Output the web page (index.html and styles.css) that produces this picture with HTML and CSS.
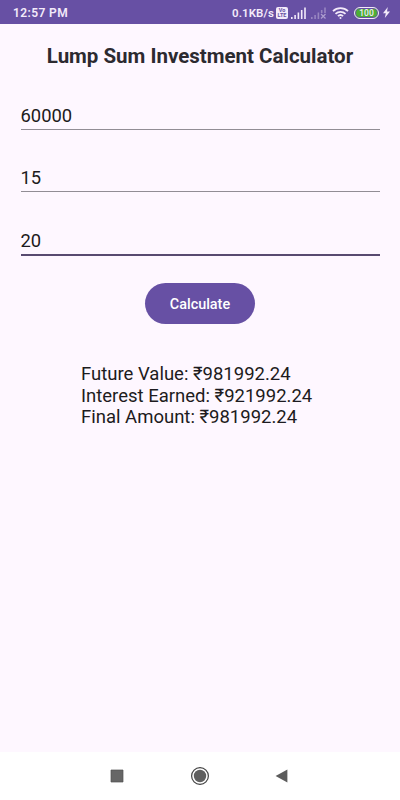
FILE: index.html
```html
<!doctype html>
<html lang="en">
  <head>
    <meta charset="UTF-8" />
    <meta name="viewport" content="width=device-width, initial-scale=1" />
    <title>Lump Sum Investment Calculator</title>
    <link rel="stylesheet" href="styles.css">
  </head>
  <body>
    <header class="status-bar">
      <span class="clock">12:57 PM</span>
      <div class="status-icons">
        <span class="net-speed">0.1KB/s</span>
        <span class="volte"><span>Vo</span><span>LTE</span></span>
        <svg class="signal" width="16" height="12" viewBox="0 0 16 12" fill="currentColor">
          <path d="M0 10h1.6v2H0zM3.3 8h1.6v4H3.3zM6.6 5.5h1.6V12H6.6zM9.9 3h1.6v9H9.9zM13.2 .5h1.6V12h-1.6z" />
        </svg>
        <svg class="signal-off" width="16" height="12" viewBox="0 0 16 12" fill="currentColor">
          <path opacity=".35" d="M0 10h1.6v2H0zM3.3 8h1.6v4H3.3zM6.6 5.5h1.6V12H6.6zM9.9 3h1.6v3H9.9zM13.2 .5h1.6V6h-1.6z" />
          <path opacity=".5" d="M10 7l4.5 4.5M14.5 7L10 11.5" stroke="currentColor" stroke-width="1.2" />
        </svg>
        <svg class="wifi" width="17" height="12" viewBox="0 0 17 12" fill="none" stroke="currentColor" stroke-width="1.8">
          <path d="M1 4.2a10.8 10.8 0 0 1 15 0M3.5 6.8a7.2 7.2 0 0 1 10 0M5.9 9.2a3.8 3.8 0 0 1 5.2 0" />
          <circle cx="8.5" cy="10.9" r="1" fill="currentColor" stroke="none" />
        </svg>
        <span class="battery">100</span>
        <svg class="bolt" width="7" height="11" viewBox="0 0 7 11" fill="currentColor">
          <path d="M4.8 0L0 6.2h2.8L1.8 11 7 4.5H4z" />
        </svg>
      </div>
    </header>

    <main class="calculator">
      <h1>Lump Sum Investment Calculator</h1>
      <input class="field" type="text" inputmode="decimal" value="60000" aria-label="Investment amount" />
      <input class="field" type="text" inputmode="decimal" value="15" aria-label="Interest rate" />
      <input class="field active" type="text" inputmode="decimal" value="20" aria-label="Years" />
      <button class="calculate-button" type="button">Calculate</button>
      <div class="result">
        <p>Future Value: ₹981992.24</p>
        <p>Interest Earned: ₹921992.24</p>
        <p>Final Amount: ₹981992.24</p>
      </div>
    </main>

    <nav class="nav-bar">
      <svg width="20" height="20" viewBox="0 0 20 20">
        <path d="M4 4h12v12H4z" fill="#666" stroke="#505050" stroke-width=".7" />
      </svg>
      <svg width="20" height="20" viewBox="0 0 20 20">
        <circle cx="10" cy="10" r="8.4" fill="none" stroke="#444" stroke-width="1.2" />
        <circle cx="10" cy="10" r="6.2" fill="#606060" />
      </svg>
      <svg width="20" height="20" viewBox="0 0 20 20">
        <path d="M2.6 10L14.4 3.4v13.2z" fill="#5c5c5c" />
      </svg>
    </nav>
  </body>
</html>
```

FILE: styles.css
```css
:root {
  --primary-color: #6750a4;
  --surface: #fef7ff;
  --text: #1d1b20;
}

* {
  box-sizing: border-box;
  margin: 0;
  padding: 0;
}

body {
  display: flex;
  flex-direction: column;
  height: 100vh;
  font-family: Roboto, "Noto Sans", sans-serif;
  background-color: var(--surface);
  color: var(--text);
}

.status-bar {
  display: flex;
  justify-content: space-between;
  align-items: center;
  height: 24px;
  padding: 1px 10px 0 13px;
  background-color: var(--primary-color);
  color: #f3eafa;
}

.clock {
  font-size: 12px;
  font-weight: 600;
  letter-spacing: 0.4px;
}

.status-icons {
  display: flex;
  align-items: center;
}

.net-speed {
  font-size: 11.5px;
  font-weight: 600;
  letter-spacing: 0.1px;
}

.volte {
  display: flex;
  flex-direction: column;
  align-items: center;
  justify-content: center;
  width: 12px;
  height: 12px;
  margin-left: 2px;
  border-radius: 2px;
  background-color: #f3eafa;
  color: var(--primary-color);
  font-size: 5.5px;
  font-weight: 700;
  line-height: 5px;
}

.signal {
  margin-left: 3px;
}

.signal-off {
  margin-left: 4px;
}

.wifi {
  margin-left: 5px;
}

.battery {
  width: 25px;
  height: 12px;
  margin-left: 5px;
  border: 1px solid #f3eafa;
  border-radius: 6px;
  background-color: #4caf35;
  box-shadow: inset 0 0 0 1px var(--primary-color);
  font-size: 8.5px;
  font-weight: 500;
  line-height: 10px;
  text-align: center;
}

.bolt {
  margin-left: 4px;
}

.calculator {
  flex: 1;
  display: flex;
  flex-direction: column;
  align-items: center;
  padding: 19px 20px 0;
}

h1 {
  margin-bottom: 33px;
  color: #2c2a30;
  font-size: 20.5px;
  font-weight: 700;
  line-height: 26px;
  white-space: nowrap;
}

.field {
  width: 359px;
  height: 28px;
  margin-bottom: 34.4px;
  padding: 0;
  border: none;
  border-bottom: 1px solid #928d95;
  background: none;
  color: var(--text);
  font-family: inherit;
  font-size: 18.4px;
  outline: none;
}

.field.active {
  height: 29px;
  margin-bottom: 27.2px;
  border-bottom: 2px solid #584a70;
}

.calculate-button {
  width: 110px;
  height: 41px;
  padding-top: 2px;
  border: none;
  border-radius: 21px;
  background-color: var(--primary-color);
  color: #fff;
  font-family: inherit;
  font-size: 14.4px;
  font-weight: 500;
}

.result {
  width: 238px;
  margin-top: 40px;
  font-size: 18.5px;
  line-height: 21.6px;
  white-space: nowrap;
}

.nav-bar {
  display: flex;
  justify-content: center;
  align-items: center;
  gap: 63px;
  height: 48px;
  background-color: #fff;
}
```
